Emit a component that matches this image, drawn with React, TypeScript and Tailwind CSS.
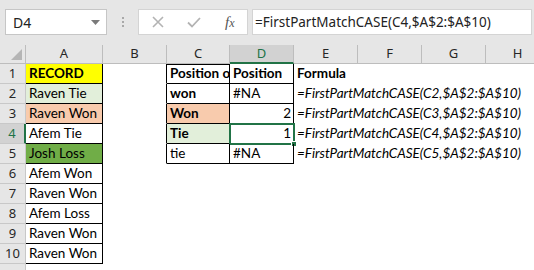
import clsx from "clsx";

type Cell = {
  t: string;
  b?: boolean;
  i?: boolean;
  right?: boolean;
  clip?: boolean;
  bg?: string;
};

const COLS = ["A", "B", "C", "D", "E", "F", "G", "H"];
const ROWS = [1, 2, 3, 4, 5, 6, 7, 8, 9, 10, 11];

const cells: Record<string, Cell> = {
  A1: { t: "RECORD", b: true, bg: "bg-[#ffff00]" },
  A2: { t: "Raven Tie", bg: "bg-[#e2efda]" },
  A3: { t: "Raven Won", bg: "bg-[#f8cbad]" },
  A4: { t: "Afem Tie" },
  A5: { t: "Josh Loss", bg: "bg-[#70ad47]" },
  A6: { t: "Afem Won" },
  A7: { t: "Raven Won" },
  A8: { t: "Afem Loss" },
  A9: { t: "Raven Won" },
  A10: { t: "Raven Won" },
  C1: { t: "Position of", b: true, clip: true },
  D1: { t: "Position", b: true },
  E1: { t: "Formula", b: true },
  C2: { t: "won", b: true },
  C3: { t: "Won", b: true, bg: "bg-[#f8cbad]" },
  C4: { t: "Tie", b: true, bg: "bg-[#e2efda]" },
  C5: { t: "tie" },
  D2: { t: "#NA" },
  D3: { t: "2", right: true },
  D4: { t: "1", right: true },
  D5: { t: "#NA" },
  E2: { t: "=FirstPartMatchCASE(C2,$A$2:$A$10)", i: true },
  E3: { t: "=FirstPartMatchCASE(C3,$A$2:$A$10)", i: true },
  E4: { t: "=FirstPartMatchCASE(C4,$A$2:$A$10)", i: true },
  E5: { t: "=FirstPartMatchCASE(C5,$A$2:$A$10)", i: true },
};

// bordered blocks: A1:A10 and C1:D5
function boxed(r: number, c: number) {
  if (c === 0 && r >= 1 && r <= 10) return true;
  if ((c === 2 || c === 3) && r >= 1 && r <= 5) return true;
  return false;
}

function FormulaBar() {
  return (
    <div className="flex h-[45px] items-start bg-[#e6e6e6] pt-[9px] font-['Noto_Sans',sans-serif]">
      <div className="ml-[5px] flex h-[26px] w-[102px] items-center justify-between border border-[#c6c6c6] bg-white pl-[7px] pr-[6px] text-[14px] text-[#222]">
        <span>D4</span>
        <svg width="9" height="5" viewBox="0 0 9 5">
          <path d="M0 0h9L4.5 5z" fill="#7a7a7a" />
        </svg>
      </div>
      <div className="ml-[15px] flex h-[26px] flex-col justify-center gap-[2px]">
        <span className="h-[2px] w-[2px] bg-[#a8a8a8]" />
        <span className="h-[2px] w-[2px] bg-[#a8a8a8]" />
        <span className="h-[2px] w-[2px] bg-[#a8a8a8]" />
      </div>
      <div className="ml-[14px] flex h-[26px] w-[110px] items-center border border-[#d4d4d4] bg-white">
        <svg className="ml-[13px]" width="12" height="12" viewBox="0 0 12 12">
          <path d="M1 1l10 10M11 1L1 11" stroke="#b3b3b3" strokeWidth="1.6" />
        </svg>
        <svg className="ml-[23px]" width="14" height="11" viewBox="0 0 14 11">
          <path d="M1 5.5l4 4L13 1" stroke="#b3b3b3" strokeWidth="1.8" fill="none" />
        </svg>
        <span className="ml-[24px] font-['Liberation_Serif',serif] text-[15px] italic text-[#555]">
          f<span className="text-[12px]">x</span>
        </span>
      </div>
      <div className="ml-[4px] flex h-[26px] w-[280px] items-center border border-[#d4d4d4] bg-white pl-[2px] text-[13.5px] text-[#222]">
        =FirstPartMatchCASE(C4,$A$2:$A$10)
      </div>
    </div>
  );
}

export default function App() {
  return (
    <div className="h-[270px] w-[534px] overflow-hidden bg-white">
      <FormulaBar />
      <div className="grid grid-cols-[26px_77px_64px_63px_64px_64px_64px_64px_64px] grid-rows-[19px_repeat(11,20px)]">
        {/* corner */}
        <div className="relative border-b border-r border-[#bdbdbd] bg-[#e6e6e6]">
          <svg className="absolute bottom-[3px] right-[3px]" width="11" height="11" viewBox="0 0 11 11">
            <path d="M11 0v11H0z" fill="#b5b5b5" />
          </svg>
        </div>
        {COLS.map((c) => (
          <div
            key={c}
            className={clsx(
              "flex items-center justify-center border-r font-['Noto_Sans',sans-serif] text-[13px]",
              c === "D"
                ? "border-b-2 border-r-[#bdbdbd] border-b-[#217346] bg-[#d2d2d2] text-[#217346]"
                : "border-b border-[#bdbdbd] bg-[#e6e6e6] text-[#262626]",
            )}
          >
            {c}
          </div>
        ))}

        {ROWS.map((r) => (
          <Row key={r} r={r} />
        ))}
      </div>
    </div>
  );
}

function Row({ r }: { r: number }) {
  const selected = r === 4;
  return (
    <>
      <div
        className={clsx(
          "flex items-center justify-center border-b border-[#c8c8c8] font-['Noto_Sans',sans-serif] text-[13px]",
          selected
            ? "border-r-2 border-r-[#217346] bg-[#d2d2d2] text-[#217346]"
            : "border-r bg-[#e6e6e6] text-[#262626]",
        )}
      >
        {r <= 10 ? r : ""}
      </div>
      {COLS.map((col, c) => {
        const cell = cells[`${col}${r}`];
        const rightBlack = boxed(r, c) || boxed(r, c + 1);
        const bottomBlack = boxed(r, c) || boxed(r + 1, c);
        return (
          <div
            key={col}
            className={clsx(
              "relative flex items-end whitespace-nowrap border-b border-r pb-[1px] pl-[3px] pr-[2px] font-['Lato',sans-serif] text-[13.5px] leading-[18px] text-black",
              rightBlack ? "border-r-black" : "border-r-transparent",
              bottomBlack ? "border-b-black" : "border-b-transparent",
              r === 1 && col === "C" && "border-t border-t-black",
              cell?.bg,
              cell?.b && "font-bold",
              cell?.i && "italic",
              cell?.right && "justify-end",
              cell?.clip ? "overflow-hidden" : "z-10 overflow-visible",
            )}
          >
            {cell?.t}
            {r === 4 && col === "D" && (
              <>
                <span className="absolute -bottom-[2px] -left-[1px] -right-[2px] -top-[1px] border-2 border-[#217346]" />
                <span className="absolute -bottom-[4px] -right-[4px] h-[6px] w-[6px] border border-white bg-[#217346]" />
              </>
            )}
          </div>
        );
      })}
    </>
  );
}
